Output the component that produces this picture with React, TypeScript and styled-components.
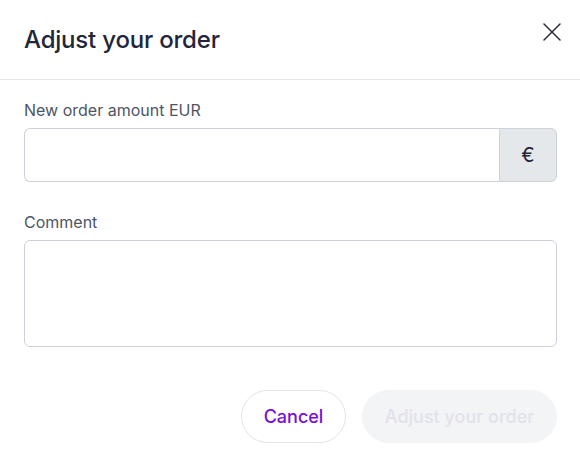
import React from "react";
import styled, { createGlobalStyle } from "styled-components";

const Global = createGlobalStyle`
  html, body { margin: 0; padding: 0; background: #fff; }
  body { font-family: Inter, "Noto Sans", sans-serif; -webkit-font-smoothing: antialiased; }
  * { box-sizing: border-box; }
`;

const Dialog = styled.div`
  width: 580px;
  height: 456px;
  background: #fff;
  display: flex;
  flex-direction: column;
`;

const Header = styled.div`
  height: 80px;
  border-bottom: 1px solid #e6e8eb;
  display: flex;
  align-items: center;
  justify-content: space-between;
  padding: 0 16px 0 24px;
`;

const Title = styled.h1`
  margin: 0;
  margin-top: -1px;
  font-size: 24px;
  font-weight: 500;
  color: #22263a;
  letter-spacing: -0.2px;
`;

const Close = styled.button`
  border: 0;
  background: none;
  padding: 0;
  width: 24px;
  height: 24px;
  display: flex;
  align-items: center;
  justify-content: center;
  margin-top: -16px;
  cursor: pointer;
`;

const Body = styled.div`
  padding: 20px 23px 0 24px;
  display: flex;
  flex-direction: column;
`;

const Field = styled.div<{ $mb?: number }>`
  display: flex;
  flex-direction: column;
  gap: 8px;
  margin-bottom: ${(p) => p.$mb ?? 0}px;
`;

const Label = styled.label`
  font-size: 16px;
  line-height: 20px;
  color: #4d5666;
`;

const InputGroup = styled.div`
  display: flex;
  height: 54px;
`;

const Input = styled.input`
  flex: 1;
  border: 1px solid #cdd2da;
  border-right: 0;
  border-radius: 6px 0 0 6px;
  font: inherit;
  font-size: 15px;
  padding: 0 12px;
  outline: none;
`;

const Addon = styled.div`
  width: 58px;
  background: #e4e8eb;
  border: 1px solid #cdd2da;
  border-radius: 0 6px 6px 0;
  display: flex;
  align-items: center;
  justify-content: center;
  font-size: 20px;
  color: #1f2330;
`;

const TextArea = styled.textarea`
  height: 107px;
  border: 1px solid #cdd2da;
  border-radius: 6px;
  resize: none;
  font: inherit;
  outline: none;
  padding: 10px 12px;
`;

const Footer = styled.div`
  display: flex;
  justify-content: flex-end;
  gap: 16px;
  padding: 43px 23px 0 24px;
`;

const Button = styled.button<{ $primary?: boolean }>`
  height: 53px;
  border-radius: 27px;
  font-family: inherit;
  font-size: 18px;
  font-weight: 500;
  padding: 0;
  border: 1px solid ${(p) => (p.$primary ? "#f3f4f5" : "#e1e4e8")};
  background: ${(p) => (p.$primary ? "#f3f4f5" : "#fff")};
  color: ${(p) => (p.$primary ? "#e2e1ec" : "#7a0bd9")};
  width: ${(p) => (p.$primary ? 195 : 105)}px;
`;

export default function App() {
  return (
    <>
      <Global />
      <Dialog>
        <Header>
          <Title>Adjust your order</Title>
          <Close aria-label="Close">
            <svg width="18" height="18" viewBox="0 0 18 18" fill="none" stroke="#2a2d35" strokeWidth="1.5" strokeLinecap="round">
              <path d="M1 1 L17 17 M17 1 L1 17" />
            </svg>
          </Close>
        </Header>
        <Body>
          <Field $mb={30}>
            <Label>New order amount EUR</Label>
            <InputGroup>
              <Input />
              <Addon>€</Addon>
            </InputGroup>
          </Field>
          <Field>
            <Label>Comment</Label>
            <TextArea />
          </Field>
        </Body>
        <Footer>
          <Button>Cancel</Button>
          <Button $primary disabled>Adjust your order</Button>
        </Footer>
      </Dialog>
    </>
  );
}
